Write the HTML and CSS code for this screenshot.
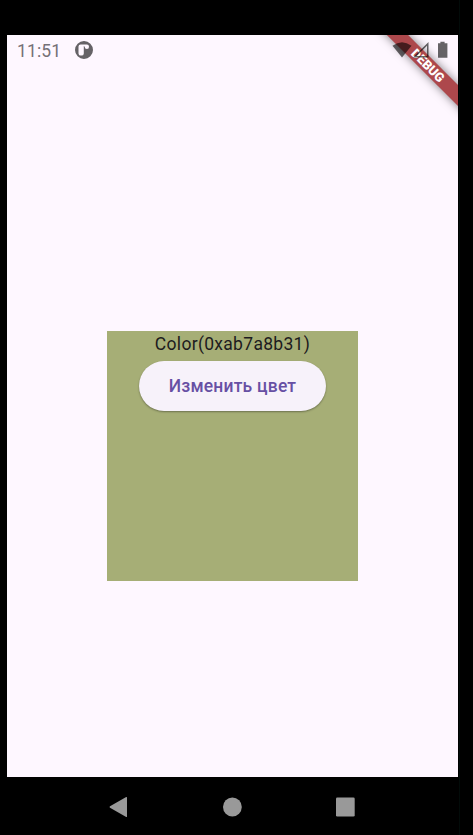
FILE: index.html
```html
<!DOCTYPE html>
<html lang="ru">
<head>
<meta charset="utf-8">
<title>Color</title>
<link rel="stylesheet" href="styles.css">
</head>
<body>
<div class="device">
  <main class="screen">
    <div class="banner"><span>DEBUG</span></div>
    <header class="status">
      <span class="clock">11:51</span>
      <svg class="app-icon" width="18" height="18" viewBox="0 0 18 18"><path fill-rule="evenodd" d="M9 0a9 9 0 1 0 0 18A9 9 0 0 0 9 0ZM5.6 3.5H11.9A2.2 2.2 0 0 1 14 5.7 2.2 2.2 0 0 1 11.9 8 2.2 2.2 0 0 1 9.7 5.8L8.8 5V12.4A2.3 2.3 0 0 1 6.5 14.6H5.8A2.3 2.3 0 0 1 3.5 12.4V5.6A2.1 2.1 0 0 1 5.6 3.5Z"/></svg>
      <svg class="signals" width="58" height="18" viewBox="0 0 58 18">
        <path d="M.5 4.8Q10-2.2 19.5 4.8L10 16.5Z"/>
        <path fill-rule="evenodd" d="M36.5 1V16.5H21ZM35 4.7 24.7 15H35Z"/>
        <path d="M46 2.2h2.4V.8h4.2v1.4H55.4V16.7H46Z"/>
      </svg>
    </header>
    <section class="swatch">
      <p class="value">Color(0xab7a8b31)</p>
      <button class="change">Изменить цвет</button>
    </section>
  </main>
  <nav class="nav">
    <svg width="20" height="22" viewBox="0 0 20 22"><path d="M1 10.2 17.2 1Q18 .7 18 1.6V20.4Q18 21.3 17.2 20.9L1 11.8Q0 11 1 10.2Z"/></svg>
    <svg width="20" height="22" viewBox="0 0 20 22"><circle cx="10.4" cy="11" r="9.4"/></svg>
    <svg width="20" height="22" viewBox="0 0 20 22"><rect x="1" y="1.5" width="18.7" height="19" rx="1.3"/></svg>
  </nav>
</div>
</body>
</html>
```
FILE: styles.css
```css
* { box-sizing: border-box; }
body { margin: 0; background: #000; font-family: Roboto, "Liberation Sans", sans-serif; }
.device { width: 460px; height: 835px; padding: 35px 1px 0 7px; border-right: 1px solid #020b09; }
.screen {
  position: relative;
  width: 451px;
  height: 742px;
  overflow: hidden;
  background: #fef7ff;
  display: flex;
  flex-direction: column;
  align-items: center;
}
.status {
  position: relative;
  width: 100%;
  height: 32px;
  padding: 0 8px 2px 10px;
  display: flex;
  align-items: center;
}
.clock { width: 44px; white-space: nowrap; font-size: 17.5px; line-height: 20px; letter-spacing: .15px; color: #757177; padding-top: 2px; }
.app-icon { margin-left: 14px; fill: #656266; }
.signals { margin-left: auto; fill: rgba(0, 0, 0, .6); }
.banner {
  position: absolute;
  left: 351px;
  top: 23px;
  width: 140px;
  height: 15px;
  transform: rotate(45deg);
  background: #ad484c;
  box-shadow: 0 0 10px rgba(0, 0, 0, .5);
  color: #fff;
  font-size: 12.8px;
  font-weight: 900;
  line-height: 15px;
  text-align: center;
}
.swatch {
  width: 251px;
  height: 250px;
  margin-top: 264px;
  background: #a6ae76;
  display: flex;
  flex-direction: column;
  align-items: center;
}
.value { margin: 0; height: 30px; padding-top: 1px; font-size: 17.5px; line-height: 25px; letter-spacing: .3px; color: #1d1b20; }
.change {
  width: 187px;
  height: 50px;
  padding: 0;
  border: 0;
  border-radius: 25px;
  background: #f7f2fa;
  box-shadow: 0 1px 2px rgba(0, 0, 0, .35);
  color: #6750a4;
  font: 500 17.5px/50px Roboto, sans-serif;
  letter-spacing: .2px;
}
.nav {
  width: 246px;
  height: 58px;
  margin-left: 102px;
  padding-top: 2px;
  display: flex;
  align-items: center;
  justify-content: space-between;
  fill: #999;
}
```
